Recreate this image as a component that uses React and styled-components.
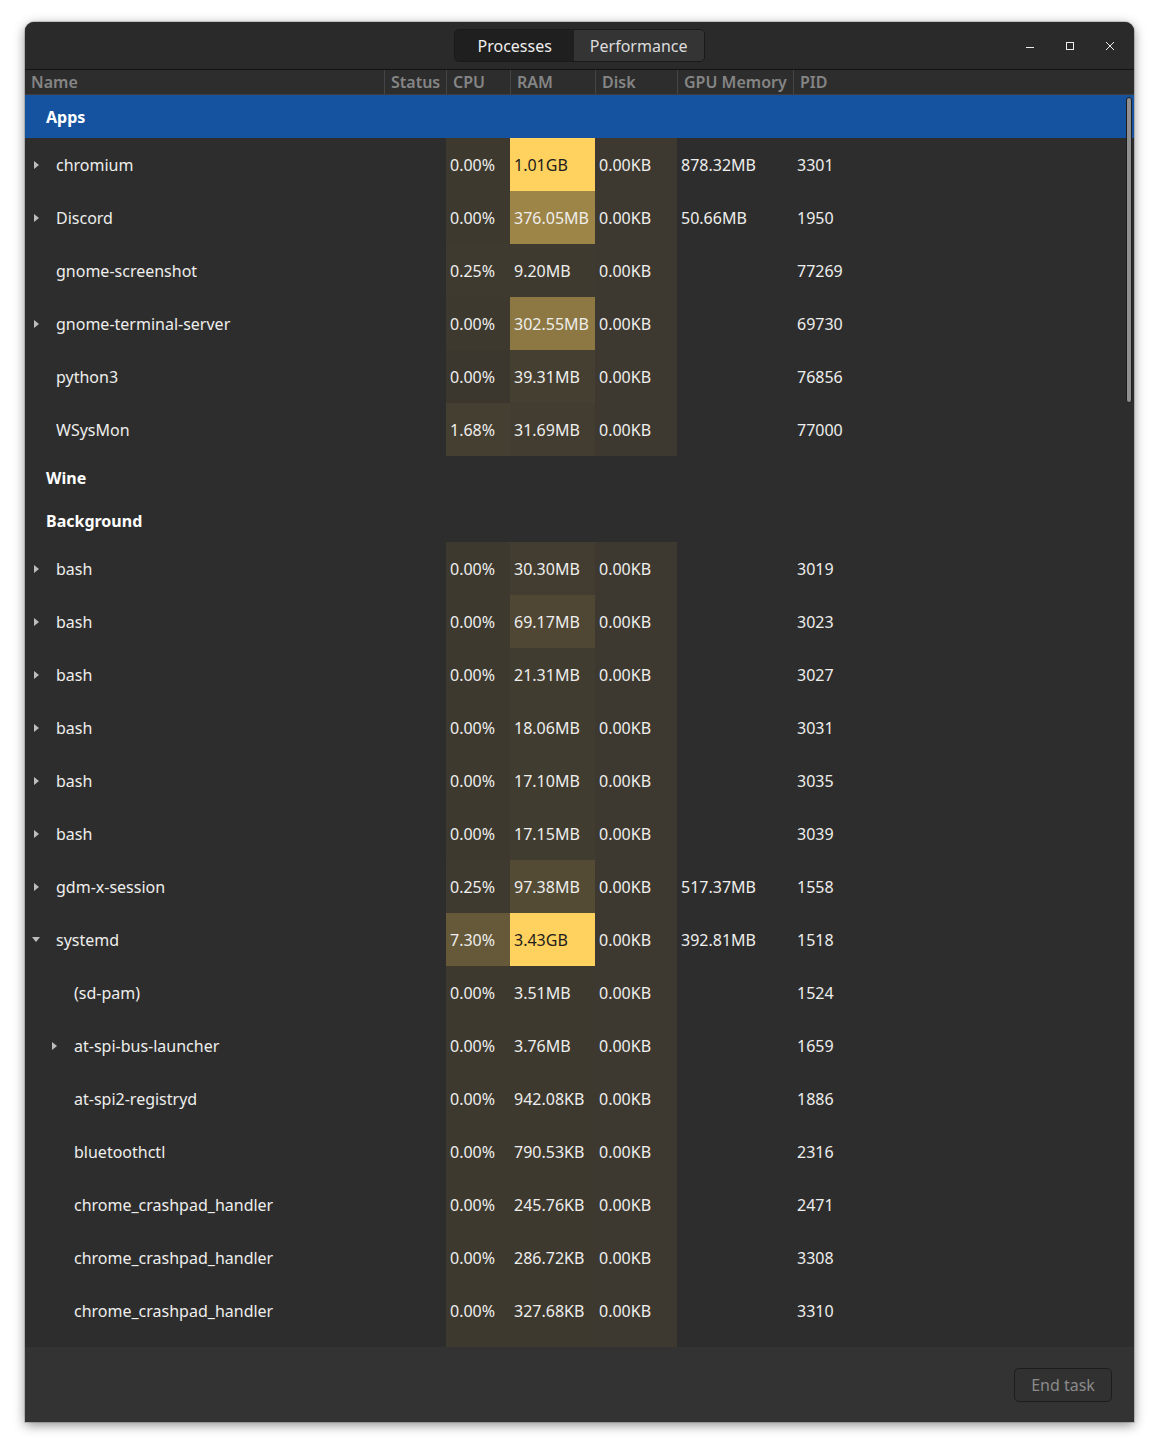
import styled, { createGlobalStyle } from 'styled-components';

const GlobalStyle = createGlobalStyle`
  html, body {
    margin: 0;
    background: #ffffff;
  }
  body {
    font-family: "Noto Sans", "Open Sans", sans-serif;
  }
`;

const COLS = '359px 62px 64px 85px 82px 116px 1fr';

const Page = styled.div`
  padding: 22px 25px 29px;
`;

const Window = styled.div`
  width: 1109px;
  height: 1400px;
  display: flex;
  flex-direction: column;
  background: #2d2d2d;
  border-radius: 9px 9px 0 0;
  box-shadow: 0 3px 12px rgba(0, 0, 0, 0.45), 0 0 0 1px rgba(0, 0, 0, 0.15);
  overflow: hidden;
  position: relative;
  color: #eeeeec;
`;

const HeaderBar = styled.div`
  height: 47px;
  flex: none;
  background: #2a2a2a;
  border-bottom: 1px solid #131313;
  display: flex;
  align-items: center;
  justify-content: center;
  position: relative;
`;

const Switcher = styled.div`
  display: flex;
  border: 1px solid #1a1a1a;
  border-radius: 5px;
  overflow: hidden;
  height: 31px;
`;

const SwitchTab = styled.div`
  display: flex;
  align-items: center;
  padding: 0 ${(p) => (p.$active ? '22px' : '16px')};
  font-size: 16px;
  color: ${(p) => (p.$active ? '#eeeeec' : '#dcdcdc')};
  background: ${(p) => (p.$active ? '#1f1f1f' : '#343434')};
`;

const WinControls = styled.div`
  position: absolute;
  right: 14px;
  top: 0;
  height: 100%;
  display: flex;
  align-items: center;
  gap: 20px;
`;

const WinButton = styled.div`
  width: 20px;
  height: 20px;
  display: flex;
  align-items: center;
  justify-content: center;
`;

const ColumnHeader = styled.div`
  display: grid;
  grid-template-columns: ${COLS};
  height: 24px;
  flex: none;
  border-bottom: 1px solid #3e3e3e;
`;

const HeadCell = styled.div`
  padding-left: 6px;
  font-size: 16px;
  font-weight: 600;
  color: #858585;
  line-height: 24px;
  border-left: ${(p) => (p.$first ? 'none' : '1px solid #454545')};
  white-space: nowrap;
  overflow: hidden;
`;

const Body = styled.div`
  flex: 1;
  overflow: hidden;
  position: relative;
`;

const GroupRow = styled.div`
  height: 43px;
  display: flex;
  align-items: center;
  padding-left: 21px;
  font-weight: 700;
  font-size: 16px;
  color: #ffffff;
  background: ${(p) => (p.$selected ? '#1553a0' : 'transparent')};
`;

const Row = styled.div`
  display: grid;
  grid-template-columns: ${COLS};
  height: 53px;
  font-size: 16px;
`;

const NameCell = styled.div`
  display: flex;
  align-items: center;
  padding-left: ${(p) => 7 + p.$level * 18}px;
  white-space: nowrap;
`;

const Expander = styled.span`
  width: 24px;
  flex: none;
  display: flex;
  align-items: center;
`;

const Arrow = styled.span`
  width: 0;
  height: 0;
  ${(p) =>
    p.$open
      ? `border-left: 4px solid transparent;
         border-right: 4px solid transparent;
         border-top: 5px solid #bdbdbd;
         margin-left: 0;`
      : `border-top: 4px solid transparent;
         border-bottom: 4px solid transparent;
         border-left: 5px solid #bdbdbd;
         margin-left: 2px;`}
`;

const Cell = styled.div`
  display: flex;
  align-items: center;
  padding-left: 4px;
  white-space: nowrap;
  overflow: hidden;
  color: ${(p) => (p.$dark ? '#1c1c1c' : '#eeeeec')};
`;

const Scrollbar = styled.div`
  position: absolute;
  right: 2px;
  top: 2px;
  width: 4px;
  height: 304px;
  border-radius: 3px;
  background: #8f8f8f;
  border: 1px solid #1e1e1e;
`;

const Footer = styled.div`
  height: 75px;
  flex: none;
  background: #333333;
  display: flex;
  align-items: center;
  justify-content: flex-end;
  padding-right: 22px;
`;

const EndTask = styled.button`
  width: 98px;
  height: 34px;
  border: 1px solid #1d1d1d;
  border-radius: 5px;
  background: #313131;
  color: #8a8a8a;
  font-family: inherit;
  font-size: 16px;
`;

const base = [59, 55, 47];
const hot = [255, 209, 94];

const heat = (h) => {
  const c = base.map((b, i) => Math.round(b + (hot[i] - b) * h));
  return `rgb(${c[0]}, ${c[1]}, ${c[2]})`;
};

const apps = [
  { name: 'chromium', exp: true, cpu: '0.00%', ch: 0.01, ram: '1.01GB', rh: 1, gpu: '878.32MB', pid: '3301' },
  { name: 'Discord', exp: true, cpu: '0.00%', ch: 0.01, ram: '376.05MB', rh: 0.5, gpu: '50.66MB', pid: '1950' },
  { name: 'gnome-screenshot', cpu: '0.25%', ch: 0.02, ram: '9.20MB', rh: 0.02, pid: '77269' },
  { name: 'gnome-terminal-server', exp: true, cpu: '0.00%', ch: 0.01, ram: '302.55MB', rh: 0.42, pid: '69730' },
  { name: 'python3', cpu: '0.00%', ch: 0.0, ram: '39.31MB', rh: 0.05, pid: '76856' },
  { name: 'WSysMon', cpu: '1.68%', ch: 0.05, ram: '31.69MB', rh: 0.04, pid: '77000' },
];

const background = [
  { name: 'bash', exp: true, cpu: '0.00%', ch: 0.01, ram: '30.30MB', rh: 0.04, pid: '3019' },
  { name: 'bash', exp: true, cpu: '0.00%', ch: 0.01, ram: '69.17MB', rh: 0.1, pid: '3023' },
  { name: 'bash', exp: true, cpu: '0.00%', ch: 0.01, ram: '21.31MB', rh: 0.03, pid: '3027' },
  { name: 'bash', exp: true, cpu: '0.00%', ch: 0.01, ram: '18.06MB', rh: 0.03, pid: '3031' },
  { name: 'bash', exp: true, cpu: '0.00%', ch: 0.01, ram: '17.10MB', rh: 0.03, pid: '3035' },
  { name: 'bash', exp: true, cpu: '0.00%', ch: 0.01, ram: '17.15MB', rh: 0.03, pid: '3039' },
  { name: 'gdm-x-session', exp: true, cpu: '0.25%', ch: 0.02, ram: '97.38MB', rh: 0.13, gpu: '517.37MB', pid: '1558' },
  { name: 'systemd', exp: true, open: true, cpu: '7.30%', ch: 0.22, ram: '3.43GB', rh: 1, gpu: '392.81MB', pid: '1518' },
  { name: '(sd-pam)', level: 1, cpu: '0.00%', ch: 0.01, ram: '3.51MB', rh: 0.01, pid: '1524' },
  { name: 'at-spi-bus-launcher', level: 1, exp: true, cpu: '0.00%', ch: 0.01, ram: '3.76MB', rh: 0.01, pid: '1659' },
  { name: 'at-spi2-registryd', level: 1, cpu: '0.00%', ch: 0.01, ram: '942.08KB', rh: 0.01, pid: '1886' },
  { name: 'bluetoothctl', level: 1, cpu: '0.00%', ch: 0.01, ram: '790.53KB', rh: 0.01, pid: '2316' },
  { name: 'chrome_crashpad_handler', level: 1, cpu: '0.00%', ch: 0.01, ram: '245.76KB', rh: 0.01, pid: '2471' },
  { name: 'chrome_crashpad_handler', level: 1, cpu: '0.00%', ch: 0.01, ram: '286.72KB', rh: 0.01, pid: '3308' },
  { name: 'chrome_crashpad_handler', level: 1, cpu: '0.00%', ch: 0.01, ram: '327.68KB', rh: 0.01, pid: '3310' },
  // next row is scrolled past the footer: only its heat cells peek out
  { name: '', level: 1, cpu: '', ch: 0.01, ram: '', rh: 0.01, disk: '', pid: '' },
];

const ProcessRow = ({ p }) => (
  <Row>
    <NameCell $level={p.level || 0}>
      <Expander>{p.exp && <Arrow $open={p.open} />}</Expander>
      {p.name}
    </NameCell>
    <Cell />
    <Cell $dark={p.ch > 0.7} style={{ background: heat(p.ch) }}>{p.cpu}</Cell>
    <Cell $dark={p.rh > 0.7} style={{ background: heat(p.rh) }}>{p.ram}</Cell>
    <Cell style={{ background: heat(0.015) }}>{p.disk ?? '0.00KB'}</Cell>
    <Cell>{p.gpu || ''}</Cell>
    <Cell>{p.pid}</Cell>
  </Row>
);

const App = () => {
  return (
    <>
      <GlobalStyle />
      <Page>
        <Window>
          <HeaderBar>
            <Switcher>
              <SwitchTab $active>Processes</SwitchTab>
              <SwitchTab>Performance</SwitchTab>
            </Switcher>
            <WinControls>
              <WinButton>
                <svg width="10" height="10" viewBox="0 0 10 10">
                  <path d="M1 6.5h8" stroke="#eeeeec" strokeWidth="1" />
                </svg>
              </WinButton>
              <WinButton>
                <svg width="10" height="10" viewBox="0 0 10 10">
                  <rect x="1.5" y="1.5" width="7" height="7" fill="none" stroke="#eeeeec" strokeWidth="1" />
                </svg>
              </WinButton>
              <WinButton>
                <svg width="10" height="10" viewBox="0 0 10 10">
                  <path d="M1 1L9 9M9 1L1 9" stroke="#eeeeec" strokeWidth="1" />
                </svg>
              </WinButton>
            </WinControls>
          </HeaderBar>
          <ColumnHeader>
            <HeadCell $first>Name</HeadCell>
            <HeadCell>Status</HeadCell>
            <HeadCell>CPU</HeadCell>
            <HeadCell>RAM</HeadCell>
            <HeadCell>Disk</HeadCell>
            <HeadCell>GPU Memory</HeadCell>
            <HeadCell>PID</HeadCell>
          </ColumnHeader>
          <Body>
            <GroupRow $selected>Apps</GroupRow>
            {apps.map((p, i) => (
              <ProcessRow key={i} p={p} />
            ))}
            <GroupRow>Wine</GroupRow>
            <GroupRow>Background</GroupRow>
            {background.map((p, i) => (
              <ProcessRow key={i} p={p} />
            ))}
            <Scrollbar />
          </Body>
          <Footer>
            <EndTask>End task</EndTask>
          </Footer>
        </Window>
      </Page>
    </>
  );
};

export default App;
